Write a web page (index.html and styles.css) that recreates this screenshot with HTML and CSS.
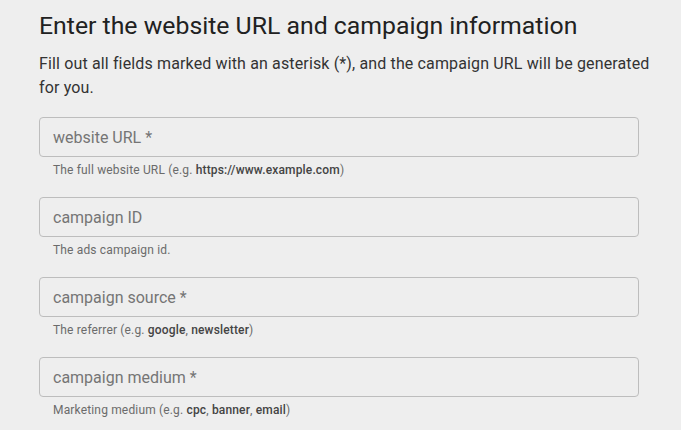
FILE: index.html
```html
<!DOCTYPE html>
<html lang="en">
<head>
<meta charset="utf-8">
<link rel="stylesheet" href="styles.css">
</head>
<body>
<main class="page">
  <h1 class="title">Enter the website URL and campaign information</h1>
  <p class="intro">Fill out all fields marked with an asterisk (*), and the campaign URL will be generated for you.</p>
  <div class="fields">
    <div class="field">
      <div class="box"><span class="ph">website URL *</span></div>
      <div class="help">The full website URL (e.g. <b>https://www.example.com</b>)</div>
    </div>
    <div class="field">
      <div class="box"><span class="ph">campaign ID</span></div>
      <div class="help">The ads campaign id.</div>
    </div>
    <div class="field">
      <div class="box"><span class="ph">campaign source *</span></div>
      <div class="help">The referrer (e.g. <b>google</b>, <b>newsletter</b>)</div>
    </div>
    <div class="field">
      <div class="box"><span class="ph">campaign medium *</span></div>
      <div class="help">Marketing medium (e.g. <b>cpc</b>, <b>banner</b>, <b>email</b>)</div>
    </div>
  </div>
</main>
</body>
</html>
```

FILE: styles.css
```css
html, body {
  margin: 0;
  background: #eeeeee;
  font-family: Roboto, "Noto Sans", sans-serif;
}
.page {
  padding: 10px 0 0 39px;
  width: 625px;
}
.title {
  margin: 0;
  font-size: 24.8px;
  font-weight: 400;
  line-height: 32px;
  color: #212121;
}
.intro {
  margin: 10px 0 0;
  font-size: 16px;
  line-height: 24px;
  letter-spacing: 0.14px;
  color: #333333;
}
.fields {
  margin-top: 17px;
  width: 600px;
  display: flex;
  flex-direction: column;
}
.field {
  height: 80px;
}
.box {
  height: 38px;
  border: 1px solid #bdbdbd;
  border-radius: 4px;
  display: flex;
  align-items: center;
  padding-left: 13px;
}
.ph {
  font-size: 16px;
  color: #757575;
}
.help {
  margin-top: 5px;
  padding-left: 14px;
  font-size: 12px;
  line-height: 16px;
  letter-spacing: 0.16px;
  color: #6b6b6b;
}
.help b {
  font-weight: 500;
  color: #444444;
}
```
